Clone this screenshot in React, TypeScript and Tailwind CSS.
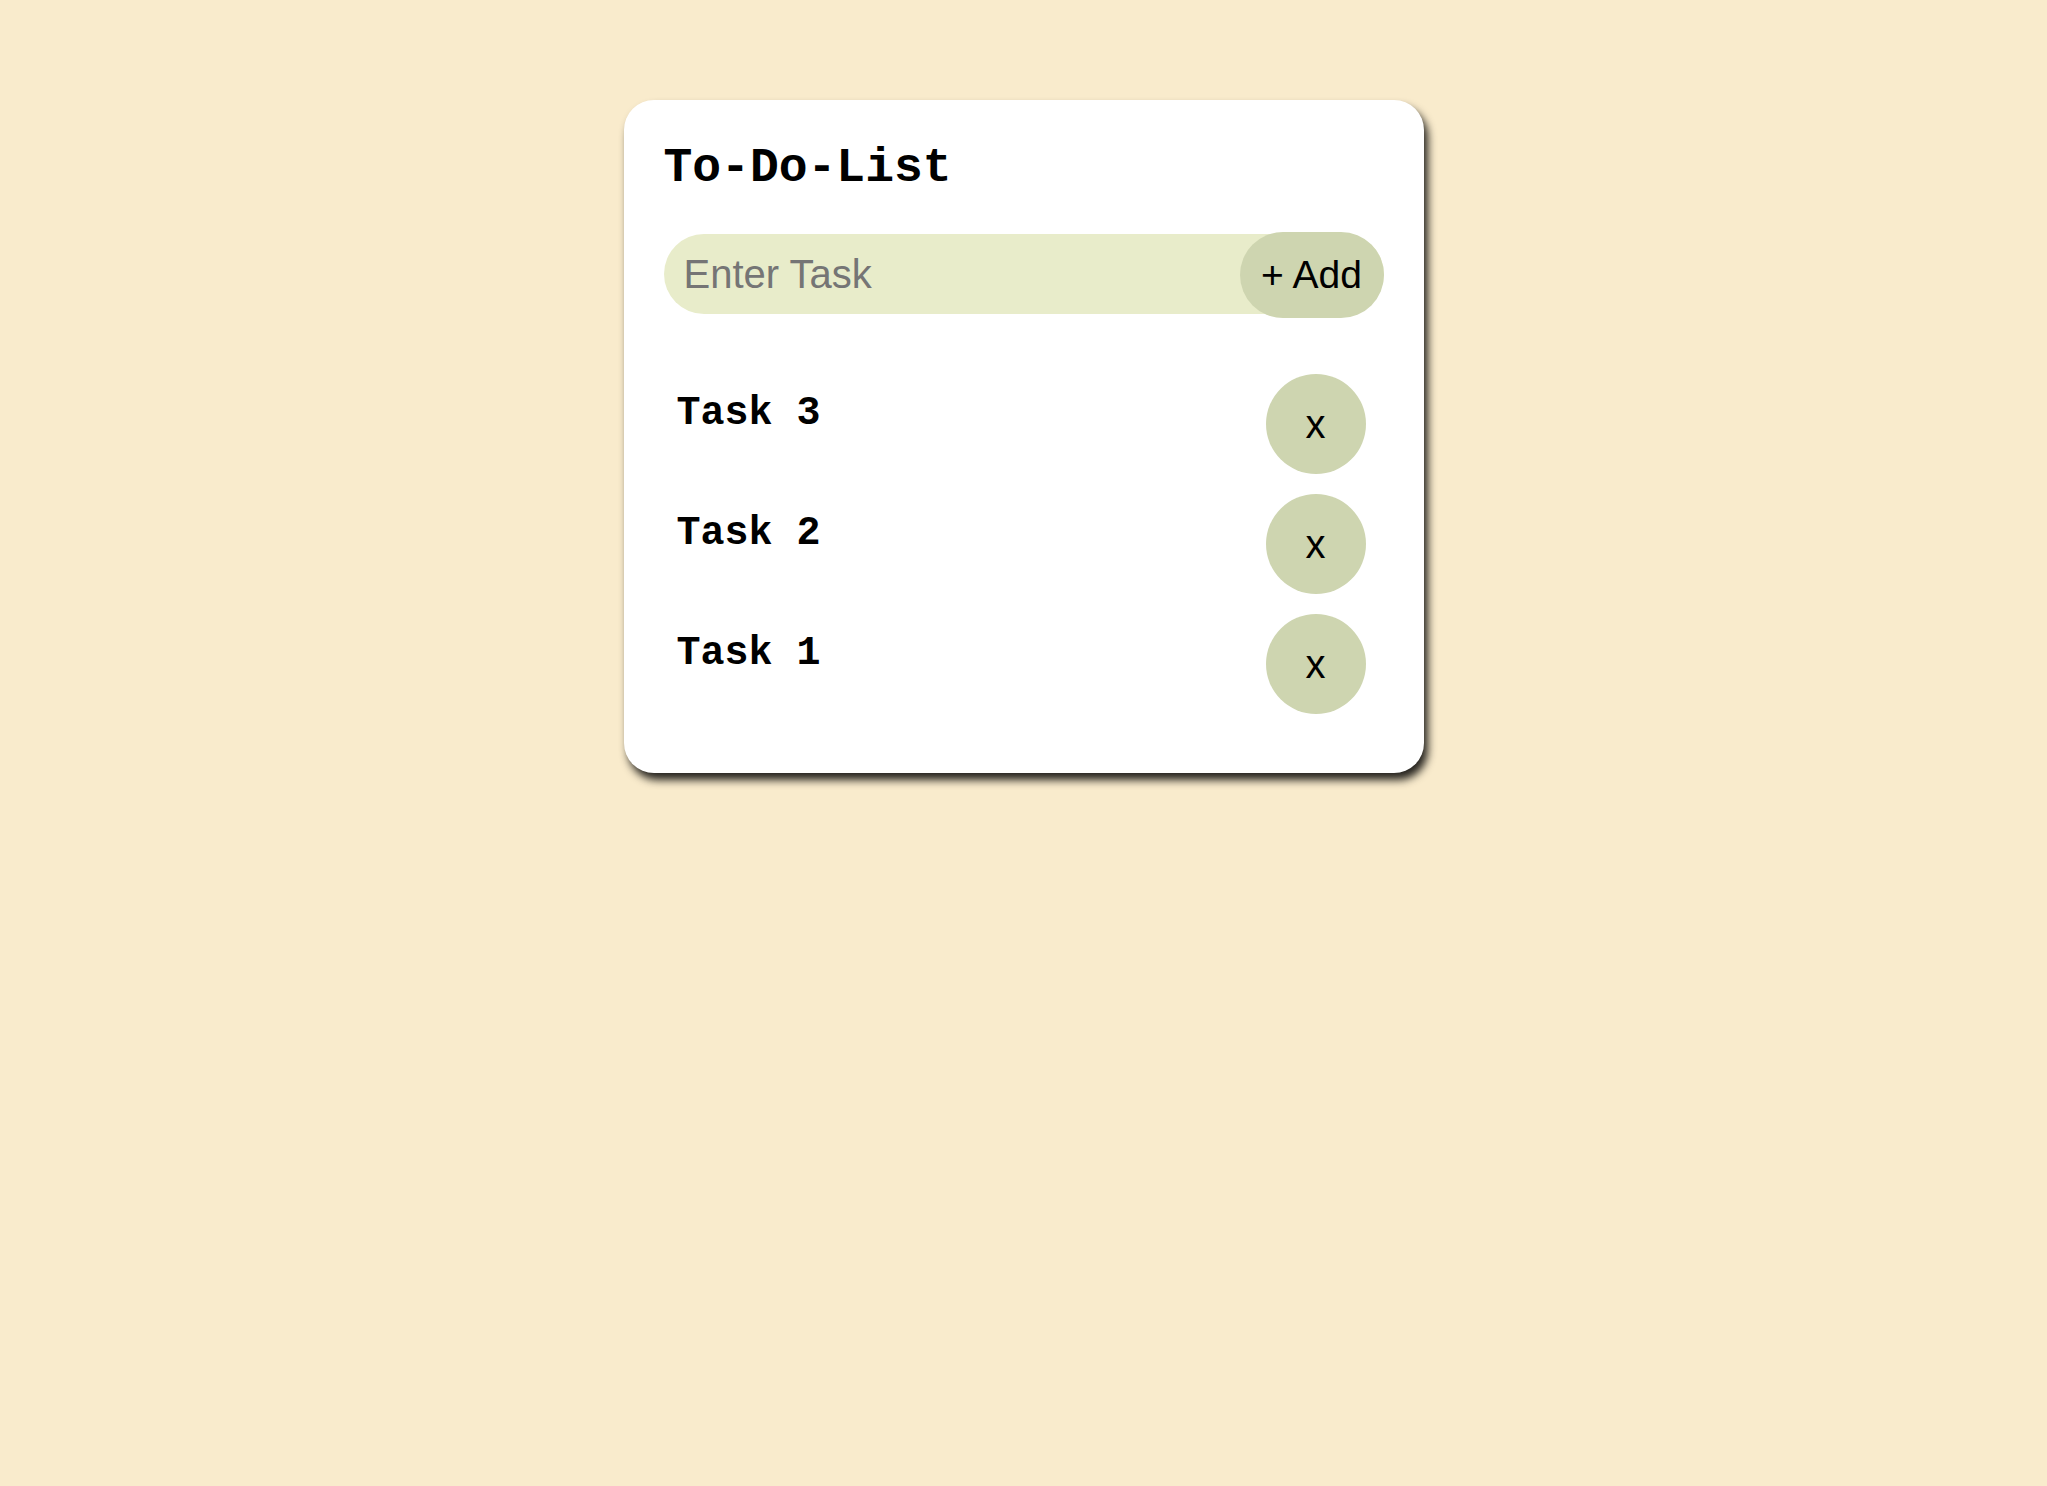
import { useState } from "react";

const mono = { fontFamily: '"Liberation Mono", "Courier New", monospace' };

export default function App() {
  const [tasks] = useState(["Task 3", "Task 2", "Task 1"]);

  return (
    <div className="min-h-screen w-full bg-[#f9ebcc] pt-[100px]">
      <div className="mx-auto w-[800px] rounded-[30px] bg-white px-[40px] pt-[41px] pb-[59px] shadow-[4px_7px_9px_rgba(0,0,0,0.85)]">
        <h1
          className="mb-[39px] text-[48px] font-bold leading-[54px] text-black"
          style={mono}
        >
          To-Do-List
        </h1>

        {/* input row, the add button sits over the input's right end */}
        <div className="relative h-[80px] font-['Liberation_Sans',Arial,sans-serif]">
          <input
            type="text"
            placeholder="Enter Task"
            className="h-full w-full rounded-full bg-[#e8ecca] pl-[20px] pr-[160px] text-[40px] text-black outline-none placeholder:text-[#757575]"
          />
          <button className="absolute right-0 top-[-2px] h-[86px] w-[144px] rounded-full bg-[#ced5b0] text-[39px] text-black">
            + Add
          </button>
        </div>

        <ul className="mt-[60px] flex flex-col gap-[20px]">
          {tasks.map((task) => (
            <li key={task} className="flex items-start justify-between pl-[13px] pr-[18px]">
              <span className="mt-[17px] text-[40px] font-bold leading-[45px] text-black" style={mono}>
                {task}
              </span>
              <button className="flex h-[100px] w-[100px] items-center justify-center rounded-full bg-[#ced5b0] font-['Liberation_Sans',Arial,sans-serif] text-[40px] text-black">
                x
              </button>
            </li>
          ))}
        </ul>
      </div>
    </div>
  );
}
